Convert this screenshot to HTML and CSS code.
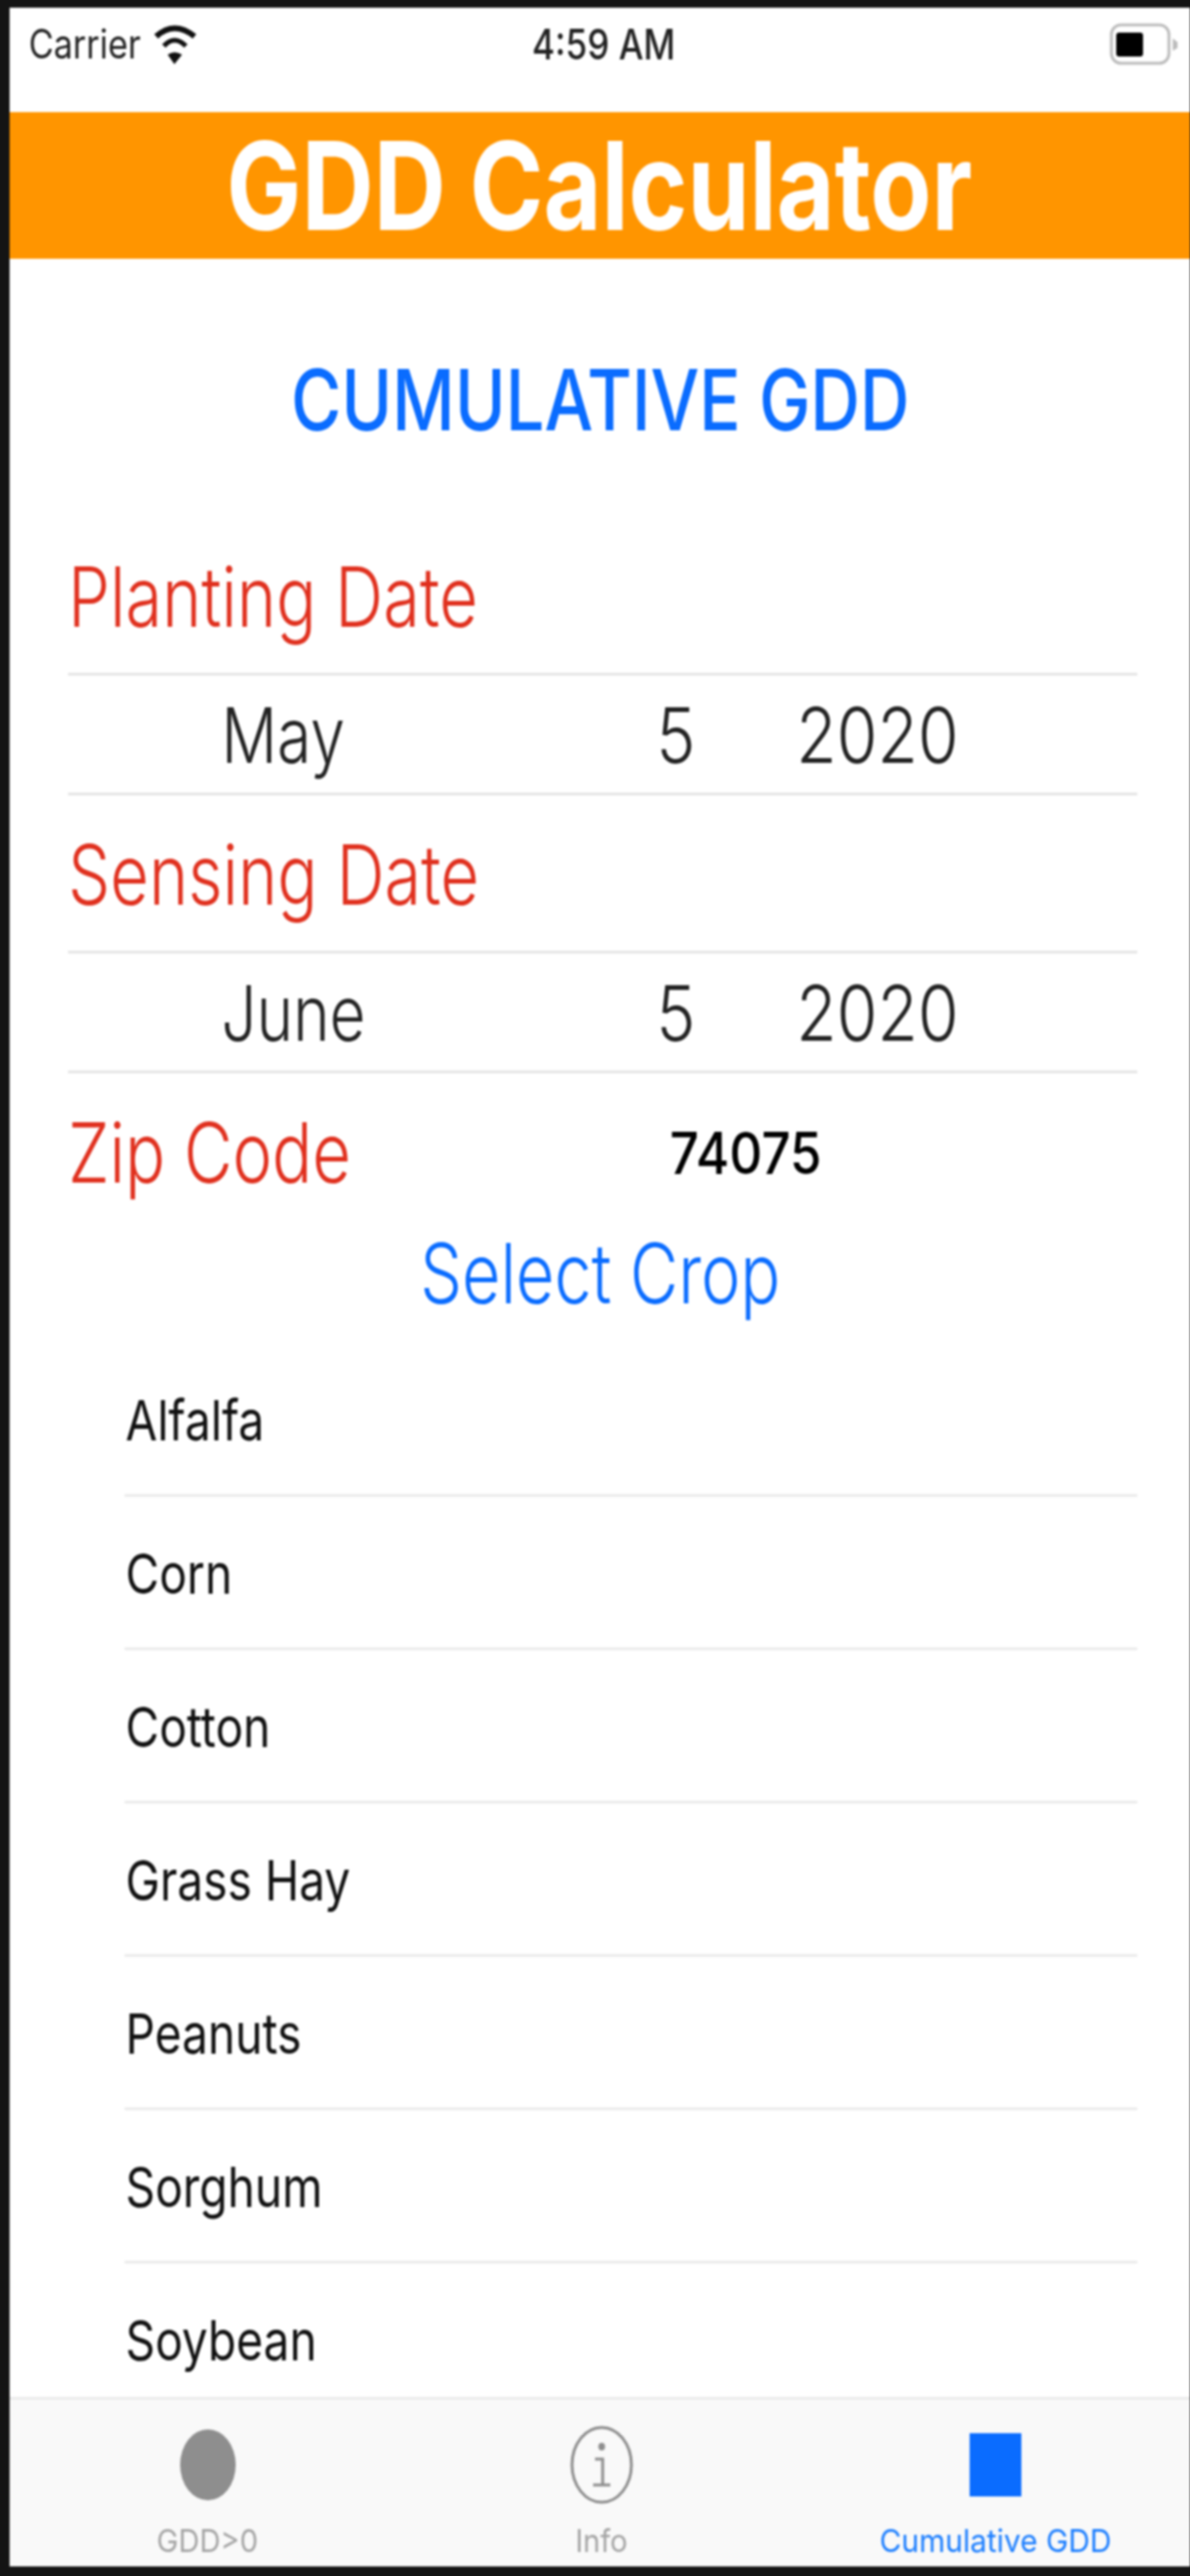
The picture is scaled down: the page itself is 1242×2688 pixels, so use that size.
FILE: index.html
```html
<!DOCTYPE html>
<html lang="en">
<head>
<meta charset="utf-8">
<title>GDD Calculator</title>
<link rel="stylesheet" href="styles.css">
</head>
<body>
<div class="screen">
  <header class="status">
    <div class="status-left">
      <span class="sq sq-left carrier">Carrier</span>
      <svg class="wifi" viewBox="0 0 45 43" aria-hidden="true">
        <path d="M3 14Q22 -3 43 14" fill="none" stroke="#111" stroke-width="6"/>
        <path d="M11 24Q22 12 34 24" fill="none" stroke="#111" stroke-width="5"/>
        <path d="M15 33Q22 28 30 33L22 43Z" fill="#111"/>
      </svg>
    </div>
    <span class="sq time">4:59 AM</span>
    <div class="status-right">
      <svg class="battery" viewBox="0 0 72 44" aria-hidden="true">
        <rect x="2" y="2" width="60" height="40" rx="10" fill="#fff" stroke="#bdbdbd" stroke-width="3"/>
        <rect x="7" y="10" width="28" height="25" rx="3" fill="#000"/>
        <path d="M66 16L71 20V26L66 29Z" fill="#bdbdbd"/>
      </svg>
    </div>
  </header>
  <div class="appbar"><span class="sq title">GDD Calculator</span></div>
  <main class="content">
    <h1 class="heading"><span class="sq heading-text">CUMULATIVE GDD</span></h1>
    <div class="label"><span class="sq sq-left">Planting Date</span></div>
    <div class="date">
      <span class="sq sq-left word">May</span><span class="sq sq-left num">5</span><span class="sq sq-left num">2020</span>
    </div>
    <div class="label"><span class="sq sq-left">Sensing Date</span></div>
    <div class="date">
      <span class="sq sq-left word">June</span><span class="sq sq-left num">5</span><span class="sq sq-left num">2020</span>
    </div>
    <div class="zip">
      <span class="sq sq-left zip-label">Zip Code</span>
      <span class="sq sq-left zip-value">74075</span>
    </div>
    <div class="select"><span class="sq select-text">Select Crop</span></div>
    <ul class="crops">
      <li class="crop"><span class="sq sq-left">Alfalfa</span></li>
      <li class="crop"><span class="sq sq-left">Corn</span></li>
      <li class="crop"><span class="sq sq-left">Cotton</span></li>
      <li class="crop"><span class="sq sq-left">Grass Hay</span></li>
      <li class="crop"><span class="sq sq-left">Peanuts</span></li>
      <li class="crop"><span class="sq sq-left">Sorghum</span></li>
      <li class="crop"><span class="sq sq-left">Soybean</span></li>
    </ul>
  </main>
  <nav class="tabs">
    <div class="tab">
      <div class="tab-icon"><span class="dot"></span></div>
      <span class="sq tab-label">GDD&gt;0</span>
    </div>
    <div class="tab">
      <div class="tab-icon">
        <svg class="info" viewBox="0 0 66 82" aria-hidden="true">
          <ellipse cx="33" cy="41" rx="31" ry="39" fill="none" stroke="#8e8e8e" stroke-width="3"/>
          <ellipse cx="33" cy="22" rx="3.5" ry="4" fill="#8e8e8e"/>
          <path d="M26 35H34V62M24 62H42" fill="none" stroke="#8e8e8e" stroke-width="3"/>
        </svg>
      </div>
      <span class="sq tab-label">Info</span>
    </div>
    <div class="tab tab-active">
      <div class="tab-icon"><span class="square"></span></div>
      <span class="sq tab-label">Cumulative GDD</span>
    </div>
  </nav>
</div>
</body>
</html>
```
FILE: styles.css
```css
* { box-sizing: border-box; }
html, body { margin: 0; height: 100%; background: #141414; }
body {
  padding: 8px 0 10px 10px;
  font-family: Inter, "Liberation Sans", sans-serif;
  color: #111;
}
.screen {
  height: 100%;
  display: flex;
  flex-direction: column;
  background: #fff;
  overflow: hidden;
  filter: blur(1px);
}
.sq { display: inline-block; transform: scaleX(var(--sx, 0.84)); white-space: nowrap; }
.sq-left { transform-origin: left center; }

.status {
  height: 109px;
  flex: none;
  display: grid;
  grid-template-columns: 1fr auto 1fr;
  align-items: center;
  padding: 0 12px 34px 20px;
  font-size: 42px;
  color: #222;
}
.status-left { display: flex; align-items: center; }
.carrier { width: 130px; --sx: 0.85; }
.time { font-size: 44px; font-weight: 500; --sx: 0.83; }
.wifi { width: 45px; height: 43px; }
.status-right { display: flex; justify-content: flex-end; }
.battery { width: 72px; height: 44px; }

.appbar {
  height: 153px;
  flex: none;
  display: flex;
  align-items: center;
  justify-content: center;
  background: #ff9500;
  color: #fff;
  font-size: 128px;
  font-weight: 700;
}
.title { --sx: 0.815; }

.content { flex: 1; min-height: 0; overflow: hidden; }
.heading {
  height: 270px;
  margin: 0;
  padding-top: 24px;
  display: flex;
  align-items: center;
  justify-content: center;
  font-size: 88px;
  font-weight: 500;
  color: #0a6cff;
}
.heading-text { --sx: 0.814; }
.label {
  height: 162px;
  display: flex;
  align-items: center;
  padding: 4px 0 0 61px;
  font-size: 86px;
  font-weight: 300;
  color: #e0301e;
  --sx: 0.81;
}
.date {
  height: 128px;
  margin: 0 55px 0 61px;
  padding-left: 160px;
  display: grid;
  grid-template-columns: 454px 146px 1fr;
  align-items: center;
  border-top: 3px solid #e6e6e6;
  border-bottom: 3px solid #e6e6e6;
  font-size: 80px;
  font-weight: 300;
  color: #222;
}
.word { --sx: 0.81; }
.num { --sx: 0.86; }
.zip {
  height: 160px;
  padding: 6px 0 0 61px;
  display: grid;
  grid-template-columns: 628px 1fr;
  align-items: center;
}
.zip-label { font-size: 86px; font-weight: 300; color: #e0301e; --sx: 0.81; }
.zip-value { font-size: 60px; font-weight: 500; color: #000; --sx: 0.888; }
.select {
  height: 92px;
  margin-bottom: 30px;
  padding-top: 6px;
  display: flex;
  align-items: center;
  justify-content: center;
  font-size: 86px;
  font-weight: 300;
  color: #0a6cff;
}
.select-text { --sx: 0.805; }
.crops { list-style: none; margin: 0 55px 0 120px; padding: 0; }
.crop {
  height: 160px;
  display: flex;
  align-items: center;
  padding-top: 2px;
  border-bottom: 3px solid #ececec;
  font-size: 58px;
  color: #111;
  --sx: 0.83;
}
.crop .sq { margin-left: 1px; }

.tabs {
  height: 177px;
  flex: none;
  display: grid;
  grid-template-columns: repeat(3, 1fr);
  column-gap: 6px;
  padding-left: 4px;
  border-top: 3px solid #ececec;
  background: #f9f9f9;
  color: #a5a5a5;
  font-size: 33px;
}
.tab { display: flex; flex-direction: column; align-items: center; }
.tab-icon {
  height: 126px;
  display: flex;
  align-items: center;
  justify-content: center;
  padding: 10px 0 0;
  margin-bottom: 1px;
}
.tab-label { --sx: 0.92; }
.tab-active { color: #1a7dff; --sx: 0.945; }
.tab-active .tab-label { --sx: 0.945; }
.dot { width: 58px; height: 74px; border-radius: 50%; background: #8e8e8e; }
.info { width: 66px; height: 82px; }
.square { width: 54px; height: 66px; background: #0a6cff; }
```
